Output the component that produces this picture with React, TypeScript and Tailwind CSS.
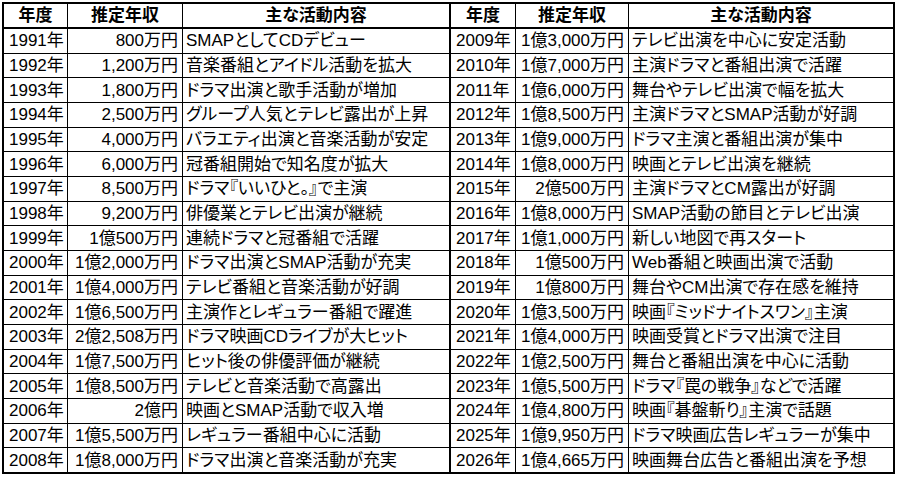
const left: [string, string, string][] = [
  ["1991年", "800万円", "SMAPとしてCDデビュー"],
  ["1992年", "1,200万円", "音楽番組とアイドル活動を拡大"],
  ["1993年", "1,800万円", "ドラマ出演と歌手活動が増加"],
  ["1994年", "2,500万円", "グループ人気とテレビ露出が上昇"],
  ["1995年", "4,000万円", "バラエティ出演と音楽活動が安定"],
  ["1996年", "6,000万円", "冠番組開始で知名度が拡大"],
  ["1997年", "8,500万円", "ドラマ『いいひと。』で主演"],
  ["1998年", "9,200万円", "俳優業とテレビ出演が継続"],
  ["1999年", "1億500万円", "連続ドラマと冠番組で活躍"],
  ["2000年", "1億2,000万円", "ドラマ出演とSMAP活動が充実"],
  ["2001年", "1億4,000万円", "テレビ番組と音楽活動が好調"],
  ["2002年", "1億6,500万円", "主演作とレギュラー番組で躍進"],
  ["2003年", "2億2,508万円", "ドラマ映画CDライブが大ヒット"],
  ["2004年", "1億7,500万円", "ヒット後の俳優評価が継続"],
  ["2005年", "1億8,500万円", "テレビと音楽活動で高露出"],
  ["2006年", "2億円", "映画とSMAP活動で収入増"],
  ["2007年", "1億5,500万円", "レギュラー番組中心に活動"],
  ["2008年", "1億8,000万円", "ドラマ出演と音楽活動が充実"],
]

const right: [string, string, string][] = [
  ["2009年", "1億3,000万円", "テレビ出演を中心に安定活動"],
  ["2010年", "1億7,000万円", "主演ドラマと番組出演で活躍"],
  ["2011年", "1億6,000万円", "舞台やテレビ出演で幅を拡大"],
  ["2012年", "1億8,500万円", "主演ドラマとSMAP活動が好調"],
  ["2013年", "1億9,000万円", "ドラマ主演と番組出演が集中"],
  ["2014年", "1億8,000万円", "映画とテレビ出演を継続"],
  ["2015年", "2億500万円", "主演ドラマとCM露出が好調"],
  ["2016年", "1億8,000万円", "SMAP活動の節目とテレビ出演"],
  ["2017年", "1億1,000万円", "新しい地図で再スタート"],
  ["2018年", "1億500万円", "Web番組と映画出演で活動"],
  ["2019年", "1億800万円", "舞台やCM出演で存在感を維持"],
  ["2020年", "1億3,500万円", "映画『ミッドナイトスワン』主演"],
  ["2021年", "1億4,000万円", "映画受賞とドラマ出演で注目"],
  ["2022年", "1億2,500万円", "舞台と番組出演を中心に活動"],
  ["2023年", "1億5,500万円", "ドラマ『罠の戦争』などで活躍"],
  ["2024年", "1億4,800万円", "映画『碁盤斬り』主演で話題"],
  ["2025年", "1億9,950万円", "ドラマ映画広告レギュラーが集中"],
  ["2026年", "1億4,665万円", "映画舞台広告と番組出演を予想"],
]

const cols = "grid grid-cols-[64px_115px_268px_65px_113px_264px]"

export default function App() {
  return (
    <div className="min-h-screen bg-white p-[2px]">
      <div className="w-[893px] border-2 border-black bg-white text-black text-[17px] leading-none font-['Liberation_Sans','Noto_Sans_CJK_JP',sans-serif] [font-feature-settings:'palt']">
        {/* header */}
        <div className={`${cols} h-[25px] border-b-2 border-black font-bold`}>
          <div className="flex items-center justify-center border-r border-black">年度</div>
          <div className="flex items-center justify-center border-r border-black">推定年収</div>
          <div className="flex items-center justify-center border-r-2 border-black">主な活動内容</div>
          <div className="flex items-center justify-center border-r border-black">年度</div>
          <div className="flex items-center justify-center border-r border-black">推定年収</div>
          <div className="flex items-center justify-center">主な活動内容</div>
        </div>

        {left.map((l, i) => {
          const r = right[i]
          const last = i === left.length - 1
          return (
            <div
              key={l[0]}
              className={`${cols} ${last ? "h-[23.7px]" : "h-[24.67px] border-b border-black"}`}
            >
              <div className="flex items-center pl-[5px] border-r border-black">{l[0]}</div>
              <div className="flex items-center justify-end pr-[4px] border-r border-black">{l[1]}</div>
              <div className="flex items-center pl-[3px] border-r-2 border-black whitespace-nowrap">{l[2]}</div>
              <div className="flex items-center pl-[5px] border-r border-black">{r[0]}</div>
              <div className="flex items-center justify-end pr-[4px] border-r border-black">{r[1]}</div>
              <div className="flex items-center pl-[3px] whitespace-nowrap">{r[2]}</div>
            </div>
          )
        })}
      </div>
    </div>
  )
}
